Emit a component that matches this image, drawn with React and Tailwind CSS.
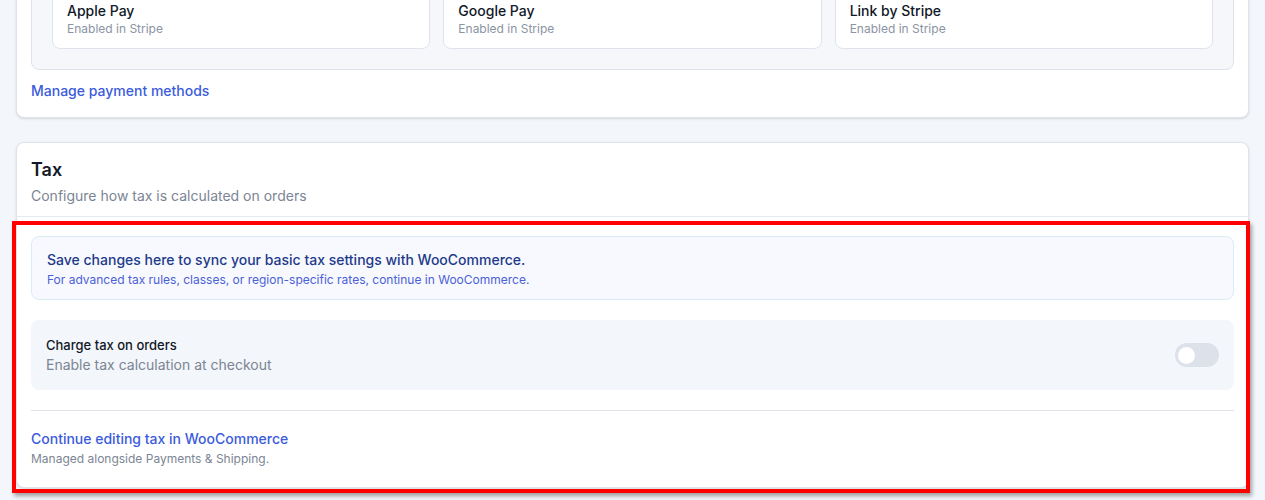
export default function App() {
  const f = { fontFamily: "Inter, 'Noto Sans', sans-serif" };
  return (
    <div style={f} className="relative h-[500px] overflow-hidden bg-[#f3f6fa] px-4">
      <div className="mt-[-50px] rounded-b-lg rounded-t-lg border border-[#dfe4ec] bg-white px-[14px] pb-4 shadow-sm">
        <div className="mt-[28px] rounded-lg border border-[#dfe4ec] bg-[#f5f7fb] px-5 pb-5 pt-3">
          <div className="grid grid-cols-3 gap-[13px]">
            {["Apple Pay", "Google Pay", "Link by Stripe"].map((t) => (
              <div key={t} className="rounded-lg border border-[#dfe4ec] bg-white px-[14px] pb-[11px] pt-[8px]">
                <div className="text-[14px] font-medium leading-5 text-[#111827]">{t}</div>
                <div className="text-[12px] leading-4 text-[#8a94a3]">Enabled in Stripe</div>
              </div>
            ))}
          </div>
        </div>
        <div className="mt-[10px] text-[14px] font-medium text-[#3b5bdb]">Manage payment methods</div>
      </div>

      <div className="mt-[24px] rounded-lg border border-[#dfe4ec] bg-white shadow-sm">
        <div className="border-b border-[#e6eaf0] px-[14px] pb-[10px] pt-[13px]">
          <div className="text-[18px] font-semibold leading-7 text-[#111827]">Tax</div>
          <div className="mt-[2px] text-[14px] leading-5 text-[#7b8594]">Configure how tax is calculated on orders</div>
        </div>
        <div className="px-[14px] pt-[19px]">
          <div className="rounded-lg border border-[#d9ecf7] bg-[#f7f9fe] px-[15px] pb-[11px] pt-[13px]">
            <div className="text-[14px] font-medium leading-5 text-[#1e3a8a]">Save changes here to sync your basic tax settings with WooCommerce.</div>
            <div className="mt-[2px] text-[12px] leading-4 text-[#4b5fd6]">For advanced tax rules, classes, or region-specific rates, continue in WooCommerce.</div>
          </div>
          <div className="mt-[20px] flex items-center justify-between rounded-lg bg-[#f3f6fa] px-[15px] py-[15px]">
            <div>
              <div className="text-[13px] font-medium leading-5 text-[#111827]">Charge tax on orders</div>
              <div className="text-[14px] leading-5 text-[#7b8594]">Enable tax calculation at checkout</div>
            </div>
            <div className="flex h-[24px] w-[44px] items-center rounded-full bg-[#dde1ea] px-[3px]">
              <div className="h-[17px] w-[17px] rounded-full bg-white" />
            </div>
          </div>
          <div className="mt-[20px] border-t border-[#dfe4ec] pb-[20px] pt-[18px]">
            <div className="text-[14px] font-medium leading-5 text-[#3b5bdb]">Continue editing tax in WooCommerce</div>
            <div className="mt-[2px] text-[12px] leading-4 text-[#7b8594]">Managed alongside Payments &amp; Shipping.</div>
          </div>
        </div>
      </div>

      <div className="pointer-events-none absolute left-[12px] top-[221px] h-[272px] w-[1238px] border-[4px] border-[#ff0000] shadow-[2px_3px_4px_rgba(0,0,0,0.35)]" />
    </div>
  );
}
